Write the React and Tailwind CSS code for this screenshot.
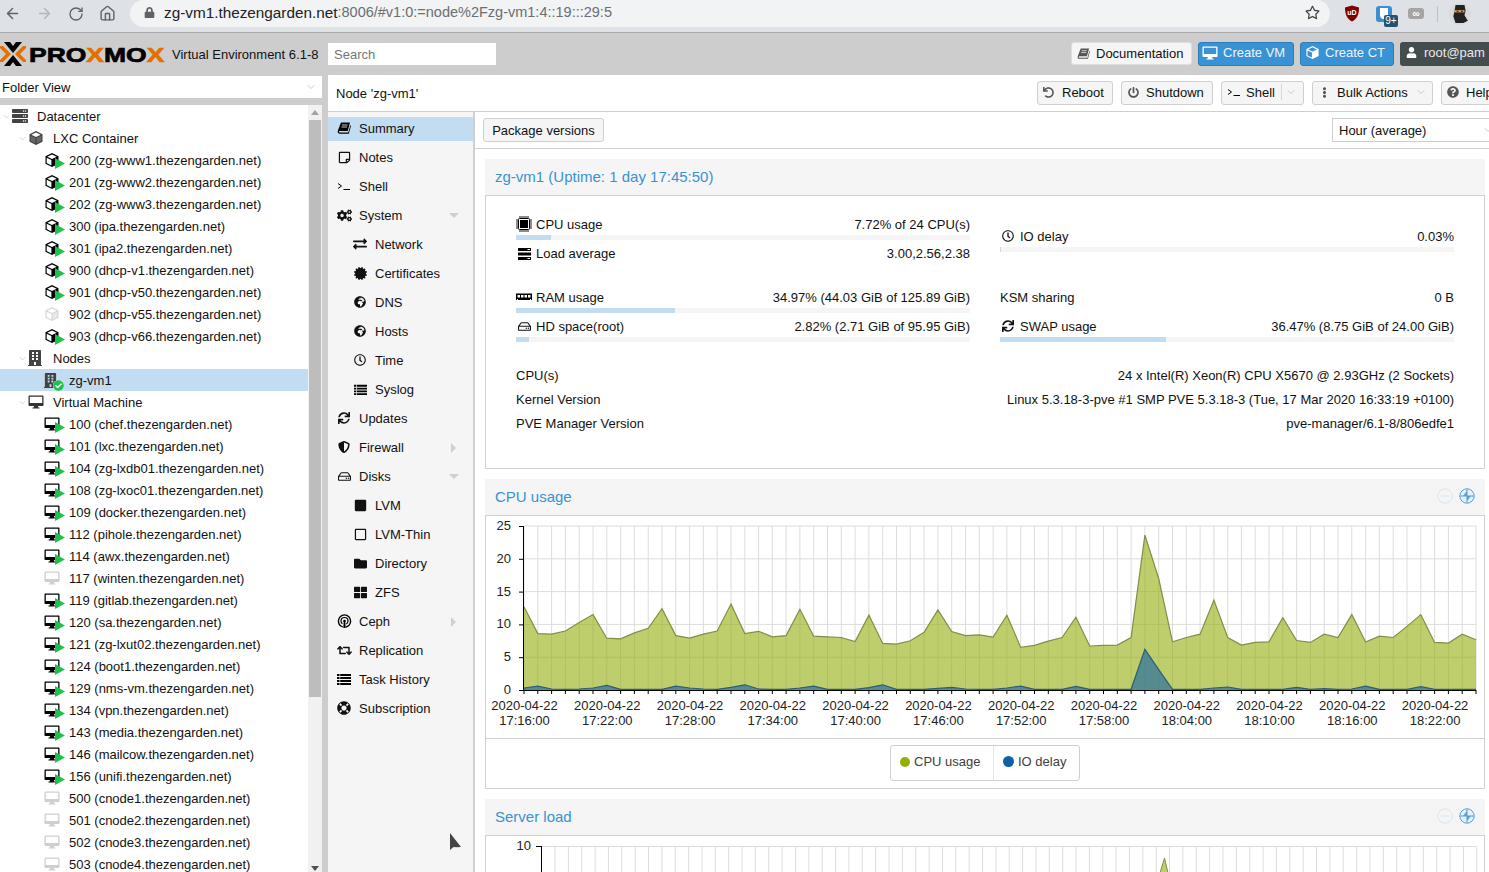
import { ArrowLeft, ArrowRight, RotateCw, Home, ChevronDown } from "lucide-react";
import {
  FaBuilding, FaCertificate, FaCheckCircle, FaCogs, FaEllipsisV, FaExchangeAlt, FaFolder,
  FaGlobeAfrica, FaLifeRing, FaLock, FaPowerOff, FaQuestionCircle, FaRegClock, FaRegHdd,
  FaRegSquare, FaRegStar, FaRegStickyNote, FaRetweet, FaServer, FaShieldAlt, FaSquare, FaSync,
  FaThLarge, FaUndo, FaUser,
} from "react-icons/fa";

const Cube = ({ size = 16, top = "#fff", left = "#fff", right = "#000", edge = "#000" }) => (
  <svg width={size} height={size} viewBox="0 0 16 16" className="shrink-0">
    <path d="M8 1 14.5 4.2v7.6L8 15 1.5 11.800V4.200Z" fill={edge} />
    <path d="M8 2.400 12.700 4.700 8 7 3.300 4.700Z" fill={top} />
    <path d="M2.700 5.800 7.400 8.100v5.300L2.700 11.100Z" fill={left} />
    <path d="M8.600 8.100 13.300 5.800v5.300L8.600 13.400Z" fill={right} />
  </svg>
);

const Desktop = ({ size = 16, color = "#000" }) => (
  <svg width={size} height={size} viewBox="0 0 16 16" className="shrink-0">
    <path
      fillRule="evenodd"
      fill={color}
      d="M1.500 1.500h13c.6 0 1 .4 1 1v8.500c0 .6-.4 1-1 1H10l.3 1.500h1.200v1h-7v-1h1.200L6 12H1.500c-.6 0-1-.4-1-1V2.500c0-.6.4-1 1-1ZM1.800 2.800V9h12.400V2.800Z"
    />
  </svg>
);

const Book = ({ size = 14, color = "#000" }) => (
  <svg width={size} height={size} viewBox="0 0 14 14" className="shrink-0">
    <path d="M4 1.500h9l-2.300 8.500H2.500c-.7 0-.8 1.500 0 1.500h8.800l2-7.300.7.500-2.200 8H2.500C.8 12.700.3 11 1 9.300Z" fill={color} />
    <path d="M5 4h5.500M4.500 6h5.500" stroke="#f5f5f5" strokeWidth="0.8" />
  </svg>
);

const Term = () => (
  <svg width="14" height="14" viewBox="0 0 14 14" className="shrink-0">
    <path d="M1 4.500 4.500 7 1 9.500M6.500 10.500H13" fill="none" stroke="#000" strokeWidth="1" />
  </svg>
);

const Chip = () => (
  <svg width="16" height="16" viewBox="0 0 16 16" className="shrink-0">
    <rect x="2.500" y="2.500" width="11" height="11" rx="1" fill="#fff" stroke="#000" />
    <rect x="4" y="4" width="8" height="8" fill="#000" />
    <path
      d="M4 0v2M6 0v2M8 0v2M10 0v2M12 0v2M4 14v2M6 14v2M8 14v2M10 14v2M12 14v2M0 4h2M0 6h2M0 8h2M0 10h2M0 12h2M14 4h2M14 6h2M14 8h2M14 10h2M14 12h2"
      stroke="#000"
      strokeWidth="0.9"
    />
  </svg>
);

const Ram = () => (
  <svg width="16" height="16" viewBox="0 0 16 16" className="shrink-0">
    <path fillRule="evenodd" fill="#000" d="M0 4.500h16v6.500h-1v-1h-1v1H2v-1H1v1H0ZM1.500 6v2.500H4V6Zm3.500 0v2.500h2.500V6Zm3.500 0v2.500H11V6Zm3.500 0v2.500h2.500V6Z" />
  </svg>
);

const Load = () => (
  <svg width="15" height="15" viewBox="0 0 15 15" className="shrink-0">
    <path fillRule="evenodd" fill="#000" d="M1 2h13v3H1Zm9.500 1v1H13V3ZM1 6.500h13v3H1Zm0 4.500h13v3H1Zm9.500 1v1H13v-1Z" />
  </svg>
);

const ListIcon = ({ size = 14 }) => (
  <svg width={size} height={size} viewBox="0 0 14 14" className="shrink-0">
    <path d="M0 2h2.500v2H0Zm3.200 0H14v2H3.200ZM0 5h2.500v2H0Zm3.200 0H14v2H3.200ZM0 8h2.500v2H0Zm3.200 0H14v2H3.200ZM0 11h2.500v2H0Zm3.200 0H14v2H3.200Z" fill="#000" />
  </svg>
);

const Ceph = () => (
  <svg width="15" height="15" viewBox="0 0 15 15" className="shrink-0">
    <circle cx="7.500" cy="7" r="6.100" fill="none" stroke="#000" strokeWidth="1.400" strokeDasharray="35 3.300" strokeDashoffset="-11.200" />
    <circle cx="7.500" cy="7" r="3.500" fill="none" stroke="#000" strokeWidth="1.200" strokeDasharray="18 4" strokeDashoffset="-7.500" />
    <circle cx="7.500" cy="7" r="1.300" fill="#000" />
    <path d="M6.800 7h1.400l.5 7H6.300Z" fill="#000" />
  </svg>
);

const Logo = () => (
  <div className="flex items-center w-[165px] shrink-0">
    <svg width="26" height="26" viewBox="0 0 26 26" className="shrink-0">
      <path d="M4 1h6l3 4 3-4h6L13 12ZM4 25h6l3-4 3 4h6L13 14Z" fill="#000" />
      <path d="M-2 5h5l8 8-8 8h-5l8-8ZM28 5h-5l-8 8 8 8h5l-8-8Z" fill="#e57000" />
    </svg>
    <div className="w-[136px] ml-[3px] shrink-0">
      <div className="inline-block origin-left scale-x-[1.26] font-['Liberation_Sans'] font-bold text-[21px] leading-none text-black [-webkit-text-stroke:0.7px_#000] whitespace-nowrap">
        PRO<span className="text-[#e57000] [-webkit-text-stroke:0.7px_#e57000]">X</span>MO
        <span className="text-[#e57000] [-webkit-text-stroke:0.7px_#e57000]">X</span>
      </div>
    </div>
  </div>
);

const GuestIcon = ({ kind, stopped }) => (
  <div className="relative w-[16px] h-[16px] shrink-0">
    {kind === "ct" ? (
      <Cube edge={stopped ? "#d8d8d8" : "#000"} right={stopped ? "#e8e8e8" : "#000"} />
    ) : (
      <Desktop color={stopped ? "#cfcfcf" : "#000"} />
    )}
    {!stopped && (
      <svg width="10" height="11" viewBox="0 0 10 11" className="absolute left-[11px] top-[6px]">
        <path d="M0 0 10 5.500 0 11Z" fill="#21bf4b" />
      </svg>
    )}
  </div>
);

const ct = [
  ["200 (zg-www1.thezengarden.net)"],
  ["201 (zg-www2.thezengarden.net)"],
  ["202 (zg-www3.thezengarden.net)"],
  ["300 (ipa.thezengarden.net)"],
  ["301 (ipa2.thezengarden.net)"],
  ["900 (dhcp-v1.thezengarden.net)"],
  ["901 (dhcp-v50.thezengarden.net)"],
  ["902 (dhcp-v55.thezengarden.net)", true],
  ["903 (dhcp-v66.thezengarden.net)"],
];

const vms = [
  ["100 (chef.thezengarden.net)"],
  ["101 (lxc.thezengarden.net)"],
  ["104 (zg-lxdb01.thezengarden.net)"],
  ["108 (zg-lxoc01.thezengarden.net)"],
  ["109 (docker.thezengarden.net)"],
  ["112 (pihole.thezengarden.net)"],
  ["114 (awx.thezengarden.net)"],
  ["117 (winten.thezengarden.net)", true],
  ["119 (gitlab.thezengarden.net)"],
  ["120 (sa.thezengarden.net)"],
  ["121 (zg-lxut02.thezengarden.net)"],
  ["124 (boot1.thezengarden.net)"],
  ["129 (nms-vm.thezengarden.net)"],
  ["134 (vpn.thezengarden.net)"],
  ["143 (media.thezengarden.net)"],
  ["146 (mailcow.thezengarden.net)"],
  ["156 (unifi.thezengarden.net)"],
  ["500 (cnode1.thezengarden.net)", true],
  ["501 (cnode2.thezengarden.net)", true],
  ["502 (cnode3.thezengarden.net)", true],
  ["503 (cnode4.thezengarden.net)", true],
];

const TreeRow = ({ icon, text, level = 0, open, selected }) => (
  <div className={`flex items-center h-[22px] shrink-0 ${selected ? "bg-[#c2ddf2]" : ""} ${level === 0 ? "pl-[12px]" : level === 1 ? "pl-[28px]" : "pl-[44px]"}`}>
    <div className="relative w-[16px] h-[16px] shrink-0 flex items-center justify-center">
      {open && <ChevronDown size={11} strokeWidth={1} className="absolute -left-[11px] top-[3px] text-[#a8a8a8]" />}
      {icon}
    </div>
    <span className="ml-[9px] whitespace-nowrap">{text}</span>
  </div>
);

const Tree = () => (
  <div className="flex h-full">
    <div className="w-[308px] shrink-0 overflow-hidden flex flex-col">
      <TreeRow open text="Datacenter" icon={<FaServer size={16} className="text-[#444]" />} />
      <TreeRow open level={1} text="LXC Container" icon={<Cube left="#666" right="#666" edge="#444" />} />
      {ct.map(([t, s]) => (
        <TreeRow key={t} level={2} text={t} icon={<GuestIcon kind="ct" stopped={s} />} />
      ))}
      <TreeRow open level={1} text="Nodes" icon={<FaBuilding size={16} className="text-[#444] -ml-[2px]" />} />
      <TreeRow
        selected
        level={2}
        text="zg-vm1"
        icon={
          <div className="relative -ml-[4px]">
            <FaBuilding size={15} className="text-[#444]" />
            <div className="absolute -right-[6px] -bottom-[3px] w-[11px] h-[11px] rounded-full bg-white flex items-center justify-center">
              <FaCheckCircle size={11} className="text-[#21bf4b]" />
            </div>
          </div>
        }
      />
      <TreeRow open level={1} text="Virtual Machine" icon={<Desktop color="#333" />} />
      {vms.map(([t, s]) => (
        <TreeRow key={t} level={2} text={t} icon={<GuestIcon kind="vm" stopped={s} />} />
      ))}
    </div>
    <div className="flex-1 bg-[#f1f1f1] flex flex-col items-center relative">
      <div className="mt-[5px] w-0 h-0 border-x-[4px] border-x-transparent border-b-[5px] border-b-[#a3a3a3]" />
      <div className="mt-[5px] w-[12px] h-[577px] bg-[#bdbdbd]" />
      <div className="absolute bottom-[1px] w-0 h-0 border-x-[4px] border-x-transparent border-t-[5px] border-t-[#505050]" />
    </div>
  </div>
);

const nav = [
  { t: "Summary", i: <Book />, active: true },
  { t: "Notes", i: <FaRegStickyNote size={13} /> },
  { t: "Shell", i: <Term /> },
  { t: "System", i: <FaCogs size={15} />, arrow: "down" },
  { t: "Network", i: <FaExchangeAlt size={14} />, sub: true },
  { t: "Certificates", i: <FaCertificate size={13} />, sub: true },
  { t: "DNS", i: <FaGlobeAfrica size={12} />, sub: true },
  { t: "Hosts", i: <FaGlobeAfrica size={12} />, sub: true },
  { t: "Time", i: <FaRegClock size={12} />, sub: true },
  { t: "Syslog", i: <ListIcon size={13} />, sub: true },
  { t: "Updates", i: <FaSync size={12} /> },
  { t: "Firewall", i: <FaShieldAlt size={12} />, arrow: "right" },
  { t: "Disks", i: <FaRegHdd size={13} />, arrow: "down" },
  { t: "LVM", i: <FaSquare size={13} />, sub: true },
  { t: "LVM-Thin", i: <FaRegSquare size={13} />, sub: true },
  { t: "Directory", i: <FaFolder size={13} />, sub: true },
  { t: "ZFS", i: <FaThLarge size={13} />, sub: true },
  { t: "Ceph", i: <Ceph />, arrow: "right" },
  { t: "Replication", i: <FaRetweet size={15} /> },
  { t: "Task History", i: <ListIcon size={14} /> },
  { t: "Subscription", i: <FaLifeRing size={14} /> },
];

const NavItem = ({ t, i, active, sub, arrow }) => (
  <div className={`flex items-center h-[24px] mb-[5px] pb-[2px] relative ${sub ? "pl-[24px]" : "pl-[8px]"} ${active ? "bg-[#c2ddf2]" : ""}`}>
    <div className="w-[16px] flex justify-center shrink-0">{i}</div>
    <span className="ml-[7px]">{t}</span>
    {arrow === "down" && <div className="absolute left-[121px] top-[9px] w-0 h-0 border-x-[5px] border-x-transparent border-t-[5px] border-t-[#d0d0d0]" />}
    {arrow === "right" && <div className="absolute left-[123px] top-[7px] w-0 h-0 border-y-[5px] border-y-transparent border-l-[5px] border-l-[#d0d0d0]" />}
  </div>
);

const ToolButton = ({ icon, children, className = "" }) => (
  <div className={`flex items-center h-[24px] pb-[2px] bg-[#f5f5f5] border border-[#cfcfcf] rounded-[3px] shrink-0 ${className}`}>
    {icon}
    {children}
  </div>
);

const Bar = ({ pct }) => (
  <div className="h-[5px] bg-[#f5f5f5]">
    <div className="h-full bg-[#c2ddf2]" style={{ width: `${pct}%` }} />
  </div>
);

const Stat = ({ icon, label, value, pct }) => (
  <div className="h-[29px]">
    <div className="h-[22px] flex items-center justify-between">
      <div className="flex items-center">
        {icon && <div className="w-[16px] flex justify-center mr-[4px] shrink-0">{icon}</div>}
        <span>{label}</span>
      </div>
      <span>{value}</span>
    </div>
    {pct !== undefined && <Bar pct={pct} />}
  </div>
);

const PanelHead = ({ title, tools }) => (
  <div className="h-[36px] pb-[2px] bg-[#f5f5f5] flex items-center justify-between pl-[10px] pr-[10px] shrink-0">
    <span className="text-[15px] text-[#3892d4]">{title}</span>
    {tools && (
      <div className="flex items-center gap-[6px]">
        <svg width="16" height="16" viewBox="0 0 16 16">
          <circle cx="8" cy="8" r="7.200" fill="none" stroke="#d3e5f3" />
          <path d="M3.500 8h9" stroke="#d3e5f3" />
        </svg>
        <svg width="16" height="16" viewBox="0 0 16 16">
          <circle cx="8" cy="8" r="7.200" fill="#e4f0f9" stroke="#5b9fd6" />
          <path d="M8 1v14M1 8h14" stroke="#5b9fd6" />
          <path d="M8 3 4 8h4ZM8 13l4-5H8Z" fill="#5b9fd6" />
        </svg>
      </div>
    )}
  </div>
);

const cpu = [
  12.7, 8.6, 8.5, 9, 10.3, 11.5, 7.9, 7.8, 8.7, 9.4, 12.4, 8.3, 7.9, 8.5, 9, 13.1, 8.6, 8.95, 8.1, 8.3, 12.3, 8.2, 8.1, 8, 7.4, 11.4, 7.1, 7, 7.5, 8.8, 12.2, 8.9,
  8.3, 8.4, 8.06, 11.4, 6.5, 6.8, 7.45, 8, 11.1, 6.7, 6.8, 6.85, 8, 23.6, 17, 7.35, 8, 8.5, 13.7, 8, 6.85, 7.25, 7.35, 11, 7.55, 7.25, 8.5, 8, 11.5, 7.3, 8.2, 8, 9.7,
  11.5, 7.25, 7.15, 8.5, 7.65,
];

const io = [
  0.3, 0.6, 0.15, 0.1, 0.15, 0.3, 0.7, 0.1, 0.1, 0.1, 0.1, 0.6, 0.3, 0.15, 0.1, 0.4, 0.8, 0.15, 0.1, 0.1, 0.3, 0.6, 0.1, 0.1, 0.1, 0.35, 0.8, 0.1, 0.1, 0.1, 0.25, 0.4,
  0.15, 0.1, 0.1, 0.3, 0.6, 0.1, 0.1, 0.1, 0.55, 0.1, 0.1, 0.1, 0.1, 6.2, 3.1, 0.1, 0.1, 0.1, 0.3, 0.45, 0.1, 0.1, 0.1, 0.1, 0.4, 0.1, 0.2, 0.1, 0.15, 0.6, 0.1, 0.1, 0.1,
  0.5, 0.1, 0.1, 0.1, 0.1,
];

const X0 = 524;
const DX = (1476 - 524) / 69;
const Y0 = 690;
const UNIT = (690 - 526) / 25;
const px = (i) => (X0 + i * DX).toFixed(1);
const py = (v) => (Y0 - v * UNIT).toFixed(1);
const line = (d) => d.map((v, i) => `${px(i)},${py(v)}`).join(" ");
const area = (d) => `${X0},${Y0} ${line(d)} 1476,${Y0}`;

const times = ["17:16:00", "17:22:00", "17:28:00", "17:34:00", "17:40:00", "17:46:00", "17:52:00", "17:58:00", "18:04:00", "18:10:00", "18:16:00", "18:22:00"];

const CpuChart = () => (
  <svg width="998" height="222" viewBox="486 516 998 222" className="block font-['Liberation_Sans']">
    {cpu.map((_, i) => (
      <line key={i} x1={px(i)} x2={px(i)} y1="526" y2={Y0} stroke="#ddd" />
    ))}
    {[5, 10, 15, 20, 25].map((v) => (
      <line key={v} x1={X0} x2="1476" y1={py(v)} y2={py(v)} stroke="#ddd" />
    ))}
    <polygon points={area(cpu)} fill="#94ae0a" fillOpacity="0.6" />
    <polyline points={line(cpu)} fill="none" stroke="#7f8f45" strokeWidth="1.200" />
    <polygon points={area(io)} fill="#115fa6" fillOpacity="0.6" />
    <polyline points={line(io)} fill="none" stroke="#2a5f78" strokeWidth="1.200" />
    <line x1="523.500" x2="523.500" y1="526" y2="690" stroke="#000" />
    <line x1={X0} x2="1476" y1="690.500" y2="690.500" stroke="#000" />
    {cpu.map((_, i) => (
      <line key={i} x1={px(i)} x2={px(i)} y1="690" y2="694" stroke="#000" />
    ))}
    {[0, 5, 10, 15, 20, 25].map((v) => (
      <g key={v}>
        <line x1="519" x2="524" y1={Number(py(v)) + 0.5} y2={Number(py(v)) + 0.5} stroke="#000" />
        <text x="511" y={Number(py(v)) + 4} textAnchor="end" fontSize="13" fill="#222">{v}</text>
      </g>
    ))}
    {times.map((t, i) => (
      <g key={t} fontSize="13" fill="#222" textAnchor="middle">
        <text x={Number(px(i * 6)) + 0.5} y="710">2020-04-22</text>
        <text x={Number(px(i * 6)) + 0.5} y="725">{t}</text>
      </g>
    ))}
  </svg>
);

const LoadChart = () => (
  <svg width="998" height="37" viewBox="486 836 998 37" className="block font-['Liberation_Sans']">
    {Array.from({ length: 70 }, (_, i) => (
      <line key={i} x1={555 + i * 13.36} x2={555 + i * 13.36} y1="846" y2="873" stroke="#ddd" />
    ))}
    <line x1="541" x2="1476" y1="846.500" y2="846.500" stroke="#ddd" />
    <line x1="541.500" x2="541.500" y1="846" y2="873" stroke="#000" />
    <line x1="536" x2="541" y1="846.500" y2="846.500" stroke="#000" />
    <text x="531" y="850" textAnchor="end" fontSize="13" fill="#222">10</text>
    <polygon points="1160,873 1164.500,858 1168,873" fill="#94ae0a" fillOpacity="0.6" stroke="#7f8f45" />
  </svg>
);

export default function App() {
  return (
    <div className="w-[1489px] h-[872px] overflow-hidden relative flex flex-col bg-[#cdcdcd] text-[13px] leading-[15px] text-[#111] font-['Liberation_Sans',sans-serif]">
      {/* browser chrome */}
      <div className="h-[33px] shrink-0 flex items-start bg-[#dee1e6] border-b border-[#a9a9a9]">
        <div className="flex items-center h-[27px] w-[130px] shrink-0 text-[#5f6368]">
          <ArrowLeft size={17} className="ml-[4px]" />
          <ArrowRight size={17} className="ml-[15px] text-[#b3b5b8]" />
          <RotateCw size={16} className="ml-[15px]" />
          <Home size={17} className="ml-[15px]" />
        </div>
        <div className="w-[1200px] h-[27px] shrink-0 bg-[#f1f3f4] rounded-full flex items-center pb-[2px] text-[15.3px] pl-[14px] pr-[10px]">
          <FaLock size={11} className="text-[#5f6368] shrink-0" />
          <span className="ml-[9px] text-[#202124]">zg-vm1.thezengarden.net</span>
          <span className="text-[#6b6e72] text-[14.5px]">:8006/#v1:0:=node%2Fzg-vm1:4::19:::29:5</span>
          <FaRegStar size={15} className="ml-auto text-[#444]" />
        </div>
        <div className="flex items-center h-[27px] pl-[14px] relative">
          <svg width="16" height="17" viewBox="0 0 16 17">
            <path d="M8 0.500 15 2.500c0 7-2 11.500-7 14-5-2.500-7-7-7-14Z" fill="#800000" />
            <text x="8" y="10" textAnchor="middle" fontSize="7" fontWeight="bold" fill="#fff">uD</text>
          </svg>
          <div className="ml-[16px] relative w-[16px] h-[16px] rounded-[3px] bg-[#3b8fd0] flex justify-center">
            <div className="w-[8px] h-[11px] rounded-b-[4px] bg-white mt-[2px]" />
            <div className="absolute left-[8px] top-[9px] w-[14px] h-[12px] rounded-[2px] bg-[#24536b] text-white text-[10px] leading-[12px] text-center">9+</div>
          </div>
          <div className="ml-[16px] w-[16px] h-[11px] rounded-[3px] bg-[#a5a5a5] flex items-center justify-center text-white text-[10px] leading-none font-bold">∞</div>
          <div className="ml-[13px] w-px h-[16px] bg-[#bdc1c6]" />
          <div className="ml-[11px] w-[22px] h-[22px] rounded-full bg-[#d9dadc] flex items-center justify-center">
            <svg width="16" height="19" viewBox="0 0 14 17">
              <path d="M3 1h8l1 5-1 4 3 5-4 2H3L1 11l1-4Z" fill="#222" />
              <path d="M2 5.500h9v2H2Z" fill="#d9a066" />
              <path d="M4 6.500h1.500M8 6.500h1.500" stroke="#000" />
            </svg>
          </div>
        </div>
      </div>

      {/* pve header */}
      <div className="h-[42px] shrink-0 flex items-center">
        <Logo />
        <span className="ml-[7px] w-[156px] shrink-0 whitespace-nowrap text-[#111]">Virtual Environment 6.1-8</span>
        <div className="w-[168px] h-[22px] bg-white text-[#757575] flex items-center pl-[6px] shrink-0">Search</div>
        <div className="w-[575px] shrink-0" />
        <div className="h-[23px] w-[121px] pb-[1px] -mt-[1px] shrink-0 bg-[#f5f5f5] border border-[#dedede] rounded-[3px] flex items-center pl-[5px]">
          <Book size={13} color="#555" />
          <span className="ml-[6px]">Documentation</span>
        </div>
        <div className="ml-[6px] h-[24px] w-[96px] pb-[2px] -mt-[1px] shrink-0 bg-[#3892d4] border border-[#2a7dba] rounded-[3px] flex items-center pl-[3px] text-[#eef6fb]">
          <Desktop size={16} color="#fff" />
          <span className="ml-[5px]">Create VM</span>
        </div>
        <div className="ml-[6px] h-[24px] w-[94px] pb-[2px] -mt-[1px] shrink-0 bg-[#3892d4] border border-[#2a7dba] rounded-[3px] flex items-center pl-[4px] text-[#eef6fb]">
          <Cube size={15} top="#3892d4" left="#3892d4" right="#fff" edge="#fff" />
          <span className="ml-[5px]">Create CT</span>
        </div>
        <div className="ml-[6px] h-[24px] w-[100px] pb-[2px] -mt-[1px] shrink-0 bg-[#444d4d] rounded-[3px] flex items-center pl-[6px] text-[#eaeaea]">
          <FaUser size={11} className="text-white" />
          <span className="ml-[7px]">root@pam</span>
        </div>
      </div>

      {/* main */}
      <div className="flex-1 min-h-0 flex">
        <div className="w-[322px] shrink-0 flex flex-col pt-[1px]">
          <div className="h-[22px] shrink-0 bg-white flex items-center justify-between pl-[2px] pr-[5px]">
            <span>Folder View</span>
            <ChevronDown size={12} strokeWidth={1} className="text-[#999]" />
          </div>
          <div className="mt-[7px] flex-1 min-h-0 bg-white">
            <Tree />
          </div>
        </div>

        <div className="w-[1161px] ml-[6px] shrink-0 bg-white flex flex-col">
          <div className="h-[37px] shrink-0 flex items-center border-b border-[#d0d0d0] overflow-hidden">
            <div className="w-[709px] shrink-0 pl-[8px]">Node 'zg-vm1'</div>
            <ToolButton className="w-[76px] pl-[5px]" icon={<FaUndo size={11} className="text-[#555]" />}>
              <span className="ml-[8px]">Reboot</span>
            </ToolButton>
            <ToolButton className="w-[92px] ml-[8px] pl-[6px]" icon={<FaPowerOff size={11} className="text-[#555]" />}>
              <span className="ml-[7px]">Shutdown</span>
            </ToolButton>
            <ToolButton className="w-[83px] ml-[8px] pl-[5px]" icon={<Term />}>
              <span className="ml-[5px]">Shell</span>
              <span className="ml-[6px] h-[16px] w-px bg-[#d8d8d8]" />
              <ChevronDown size={12} strokeWidth={1} className="ml-[3px] text-[#999]" />
            </ToolButton>
            <ToolButton className="w-[121px] ml-[8px] pl-[6px]" icon={<FaEllipsisV size={11} className="text-[#555]" />}>
              <span className="ml-[7px]">Bulk Actions</span>
              <ChevronDown size={12} strokeWidth={1} className="ml-[7px] text-[#999]" />
            </ToolButton>
            <ToolButton className="w-[70px] ml-[8px] pl-[5px]" icon={<FaQuestionCircle size={12} className="text-[#555]" />}>
              <span className="ml-[7px]">Help</span>
            </ToolButton>
          </div>

          <div className="flex-1 min-h-0 flex">
            <div className="w-[147px] shrink-0 bg-[#f5f5f5] border-r-[2px] border-[#d0d0d0] pt-[5px]">
              {nav.map((n) => (
                <NavItem key={n.t} {...n} />
              ))}
            </div>

            <div className="flex-1 min-w-0 overflow-hidden flex flex-col">
              <div className="h-[37px] shrink-0 flex items-center border-b border-[#d0d0d0] pl-[8px]">
                <div className="w-[121px] h-[24px] bg-[#f5f5f5] border border-[#cfcfcf] rounded-[3px] flex items-center justify-center shrink-0">
                  Package versions
                </div>
                <div className="ml-[728px] w-[170px] h-[24px] border border-[#cfcfcf] flex items-center pl-[6px] shrink-0 relative">
                  Hour (average)
                  <ChevronDown size={12} strokeWidth={1} className="absolute left-[149px] top-[5px] text-[#999]" />
                </div>
              </div>

              <div className="flex-1 min-h-0 pt-[10px] pl-[10px] w-[1010px]">
                <div className="flex flex-col">
                  <PanelHead title="zg-vm1 (Uptime: 1 day 17:45:50)" />
                  <div className="h-[274px] border border-[#d0d0d0] pt-[17px] px-[30px]">
                    <div className="grid grid-cols-2 gap-x-[30px] w-[938px]">
                      <div>
                        <Stat icon={<Chip />} label="CPU usage" value="7.72% of 24 CPU(s)" pct={7.72} />
                        <Stat icon={<Load />} label="Load average" value="3.00,2.56,2.38" />
                        <div className="h-[15px]" />
                        <Stat icon={<Ram />} label="RAM usage" value="34.97% (44.03 GiB of 125.89 GiB)" pct={34.97} />
                        <Stat icon={<FaRegHdd size={13} />} label="HD space(root)" value="2.82% (2.71 GiB of 95.95 GiB)" pct={2.82} />
                      </div>
                      <div className="pt-[12px]">
                        <Stat icon={<FaRegClock size={12} />} label="IO delay" value="0.03%" pct={0.03} />
                        <div className="h-[32px]" />
                        <Stat label="KSM sharing" value="0 B" />
                        <Stat icon={<FaSync size={12} />} label="SWAP usage" value="36.47% (8.75 GiB of 24.00 GiB)" pct={36.47} />
                      </div>
                    </div>
                    <div className="mt-[19px] w-[938px] flex flex-col">
                      {[
                        ["CPU(s)", "24 x Intel(R) Xeon(R) CPU X5670 @ 2.93GHz (2 Sockets)"],
                        ["Kernel Version", "Linux 5.3.18-3-pve #1 SMP PVE 5.3.18-3 (Tue, 17 Mar 2020 16:33:19 +0100)"],
                        ["PVE Manager Version", "pve-manager/6.1-8/806edfe1"],
                      ].map(([k, v]) => (
                        <div key={k} className="h-[24px] flex items-center justify-between">
                          <span>{k}</span>
                          <span>{v}</span>
                        </div>
                      ))}
                    </div>
                  </div>
                </div>

                <div className="mt-[10px] flex flex-col">
                  <PanelHead title="CPU usage" tools />
                  <div className="border border-[#d0d0d0]">
                    <CpuChart />
                    <div className="h-[50px] border-t border-[#d0d0d0] flex items-center justify-center pb-[2px]">
                      <div className="h-[36px] flex items-stretch border border-[#cfcfcf] rounded-[3px] text-[#404040]">
                        <div className="w-[103px] flex items-center pl-[9px] pb-[2px] border-r border-[#e4e4e4]">
                          <span className="w-[10px] h-[10px] rounded-full bg-[#94ae0a] mr-[4px]" />
                          CPU usage
                        </div>
                        <div className="w-[85px] flex items-center pl-[9px] pb-[2px]">
                          <span className="w-[11px] h-[11px] rounded-full bg-[#115fa6] mr-[4px]" />
                          IO delay
                        </div>
                      </div>
                    </div>
                  </div>
                </div>

                <div className="mt-[10px] flex flex-col">
                  <PanelHead title="Server load" tools />
                  <div className="border border-[#d0d0d0] border-b-0">
                    <LoadChart />
                  </div>
                </div>
              </div>
            </div>
          </div>
        </div>
      </div>

      {/* mouse pointer over the page */}
      <svg width="14" height="20" viewBox="0 0 14 20" className="absolute left-[449px] top-[833px]">
        <path d="M1 0v17l3.500-3 3 .2 4.500-.2Z" fill="#444" />
      </svg>
    </div>
  );
}
